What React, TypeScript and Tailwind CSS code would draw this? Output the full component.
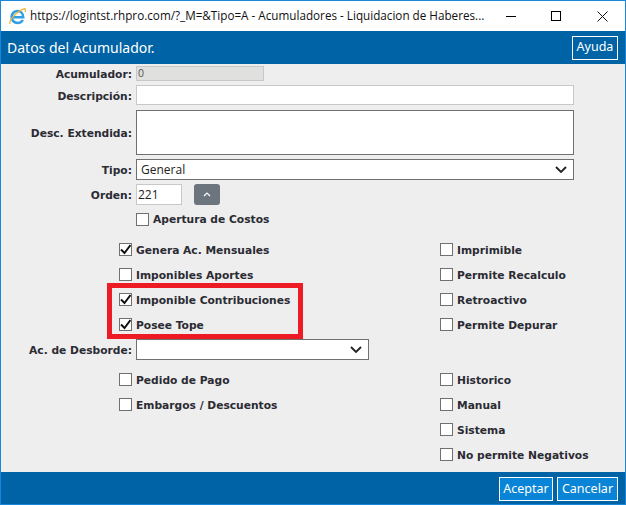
import React from "react";

const verdana = "font-['DejaVu_Sans',Verdana,sans-serif]";

function Check({ label, checked = false, flush = false }: { label?: string; checked?: boolean; flush?: boolean }) {
  return (
    <label className="flex h-[25px] items-center">
      <span className="flex h-[13px] w-[13px] shrink-0 items-center justify-center border border-[#707070] bg-white">
        {checked && (
          <svg width="11" height="11" viewBox="0 0 11 11">
            <path d="M1 5.5 L4.5 9 L10.5 1" fill="none" stroke="#111" strokeWidth="2" />
          </svg>
        )}
      </span>
      {label && (
        <span className={`ml-[4px] text-[10.7px] leading-[15px] font-bold whitespace-nowrap text-[#2b2b33] ${flush ? "" : "pt-[2px]"}`}>{label}</span>
      )}
    </label>
  );
}

function Row({ label, children, className = "" }: { label?: string; children: React.ReactNode; className?: string }) {
  return (
    <div className={`flex items-center ${className}`}>
      <span className="mr-[4px] w-[131px] shrink-0 pt-[2px] text-right text-[10.7px] leading-[13px] font-bold whitespace-nowrap text-[#2b2b33]">{label}</span>
      {children}
    </div>
  );
}

function SelectBox({ value, className }: { value?: string; className: string }) {
  return (
    <div className={`flex items-center justify-between border border-[#707070] bg-white pr-[6px] pl-[4px] text-[12px] text-[#222] ${className}`}>
      <span className="font-['Open_Sans',sans-serif] leading-[16px]">{value}</span>
      <svg width="12" height="7" viewBox="0 0 12 7">
        <path d="M1 1 L6 6 L11 1" fill="none" stroke="#222" strokeWidth="1.8" />
      </svg>
    </div>
  );
}

export default function App() {
  return (
    <div className={`relative flex h-[505px] w-[626px] flex-col overflow-hidden border border-[#1a86d9] bg-[#eeeeee] ${verdana}`}>
      {/* Window title bar */}
      <div className="flex h-[30px] shrink-0 items-center bg-white pl-[8px]">
        <svg width="17" height="17" viewBox="0 0 17 17">
          <path d="M2.6 9.2 H14.2 C14.2 5.6 11.8 3 8.6 3 C5.2 3 2.6 5.7 2.6 9 C2.6 12.3 5.2 15 8.6 15 C10.8 15 12.8 13.9 13.8 12" fill="none" stroke="#2f9fe8" strokeWidth="2.6" />
          <path d="M1 16 C-0.5 12.5 8 3 15 0.8 C16.6 0.5 16.8 2.4 16 4" fill="none" stroke="#f0b52e" strokeWidth="1.3" />
        </svg>
        <span className="ml-[4px] w-[458px] font-['Open_Sans',sans-serif] text-[11.7px] whitespace-nowrap text-[#111]">
          https://logintst.rhpro.com/?_M=&amp;Tipo=A - Acumuladores - Liquidacion de Haberes...
        </span>
        <div className="ml-[18px] flex items-center">
          <div className="h-px w-[10px] bg-black" />
          <div className="ml-[35px] h-[10px] w-[10px] border border-black" />
          <svg className="ml-[36px]" width="11" height="11" viewBox="0 0 11 11">
            <path d="M0.5 0.5 L10.5 10.5 M10.5 0.5 L0.5 10.5" stroke="#111" strokeWidth="1" />
          </svg>
        </div>
      </div>

      {/* Header */}
      <div className="flex h-[33px] shrink-0 items-center justify-between bg-[#0063a6] pr-[7px] pl-[6px] text-white">
        <span className="font-['Noto_Sans',sans-serif] text-[14px]">Datos del Acumulador.</span>
        <span className="flex h-[24px] w-[46px] items-center justify-center border border-white font-['Noto_Sans',sans-serif] text-[12.5px]">Ayuda</span>
      </div>

      {/* Form */}
      <div className="flex flex-1 flex-col pt-[2px]">
        <Row label="Acumulador:">
          <div className="flex h-[15px] w-[128px] items-center border border-[#c8c8c8] bg-[#e0e0df] pl-[1px] font-['Open_Sans',sans-serif] text-[10.5px] text-[#555]">0</div>
        </Row>
        <Row label="Descripción:" className="mt-[4px]">
          <div className="h-[20px] w-[438px] border border-[#c8c8c8] bg-white" />
        </Row>
        <Row label="Desc. Extendida:" className="mt-[5px]">
          <div className="h-[45px] w-[438px] border border-[#707070] bg-white" />
        </Row>
        <Row label="Tipo:" className="mt-[4px]">
          <SelectBox value="General" className="h-[21px] w-[438px]" />
        </Row>
        <Row label="Orden:" className="mt-[4px]">
          <div className="flex h-[21px] w-[46px] items-center border border-[#c8c8c8] bg-white pl-[1px] font-['Open_Sans',sans-serif] text-[12px] text-[#222]">221</div>
          <div className="ml-[12px] flex h-[21px] w-[26px] items-center justify-center rounded-[3px] bg-[#6c757d]">
            <svg width="8" height="5" viewBox="0 0 8 5">
              <path d="M1 4 L4 1 L7 4" fill="none" stroke="#fff" strokeWidth="1.2" />
            </svg>
          </div>
        </Row>
        <div className="mt-[2px] ml-[135px]">
          <Check label="Apertura de Costos" flush />
        </div>

        <div className="mt-[5px] ml-[118px] grid grid-cols-[321px_1fr]">
          <Check label="Genera Ac. Mensuales" checked />
          <Check label="Imprimible" />
          <Check label="Imponibles Aportes" />
          <Check label="Permite Recalculo" />
          <Check label="Imponible Contribuciones" checked />
          <Check label="Retroactivo" />
          <Check label="Posee Tope" checked />
          <Check label="Permite Depurar" />
        </div>

        <Row label="Ac. de Desborde:" className="mt-[2px]">
          <SelectBox className="h-[21px] w-[233px]" />
        </Row>

        <div className="mt-[7px] ml-[118px] grid grid-cols-[321px_1fr]">
          <Check label="Pedido de Pago" />
          <Check label="Historico" />
          <Check label="Embargos / Descuentos" />
          <Check label="Manual" />
          <span />
          <Check label="Sistema" />
          <span />
          <Check label="No permite Negativos" />
        </div>
      </div>

      {/* Footer */}
      <div className="flex h-[32px] shrink-0 items-start justify-end gap-[4px] bg-[#0063a6] pt-[5px] pr-[7px]">
        <button className="flex h-[24px] w-[54px] items-center justify-center border border-white bg-[#0a84d6] font-['Noto_Sans',sans-serif] text-[12.5px] text-white">Aceptar</button>
        <button className="flex h-[24px] w-[61px] items-center justify-center border border-white bg-[#0a84d6] font-['Noto_Sans',sans-serif] text-[12.5px] text-white">Cancelar</button>
      </div>

      {/* Annotation drawn on the screenshot */}
      <div className="absolute top-[282px] left-[106px] h-[56px] w-[196px] border-[5px] border-[#ed1c24]" />
    </div>
  );
}
